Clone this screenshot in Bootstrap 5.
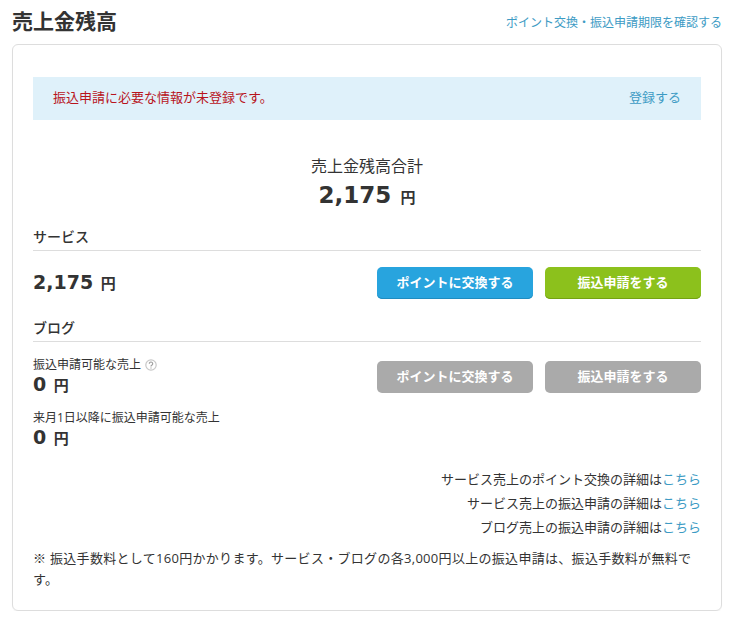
<!doctype html>
<html lang="ja">
<head>
<meta charset="utf-8">
<title>売上金残高</title>
<link href="https://cdn.jsdelivr.net/npm/bootstrap@5.3.0/dist/css/bootstrap.min.css" rel="stylesheet">
<style>
body{font-family:"Open Sans","Noto Sans CJK JP",sans-serif;color:#333;font-size:13px;background:#fff;line-height:1.5}
a{color:#3d9bc4;text-decoration:none}
.page-wrap{padding:7px 12px 0;width:734px}
.page-head{height:37px}
.page-title{font-size:21px;font-weight:700;line-height:28px;margin:0;color:#333}
.head-link{font-size:12px;line-height:18px;padding-top:7px}
.panel-box{border:1px solid #ddd;border-radius:6px;padding:32px 20px 20px;box-shadow:0 1px 1px rgba(0,0,0,.04)}
.notice-bar{background:#dff1fa;height:43px;padding:0 20px 2px;font-size:13px}
.notice-text{color:#b8141c}
.notice-link{font-size:13px}
.total-block{margin-top:35px;height:61px}
.total-label{font-size:16px;line-height:22px}
.total-num{font-family:"DejaVu Sans","Noto Sans CJK JP",sans-serif;font-size:23px;font-weight:700;line-height:36px}
.yen-big{font-family:"Noto Sans CJK JP",sans-serif;font-size:15px;font-weight:700;margin-left:1px}
.sec-title{font-size:14px;line-height:20px;padding-bottom:3px;border-bottom:1px solid #ddd;font-weight:500}
.svc-sec{margin-top:11px}
.svc-row{height:64px}
.amount{font-family:"DejaVu Sans","Noto Sans CJK JP",sans-serif;font-size:19px;font-weight:700;line-height:24px}
.amount-lift{padding-bottom:2px}
.amount-tight{margin-top:-2px}
.yen{font-family:"Noto Sans CJK JP",sans-serif;font-size:15px;font-weight:700;margin-left:1px}
.pay-group{gap:12px}
.pay-btn{width:156px;height:32px;border:0;border-radius:5px;color:#fff;font-size:13px;font-weight:700;padding:0 0 2px;line-height:30px;display:block}
.pay-blue,.pay-blue:hover{background:#28a4de;box-shadow:inset 0 -1px 0 #1f8cc0;color:#fff}
.pay-green,.pay-green:hover{background:#8cc11c;box-shadow:inset 0 -1px 0 #74a212;color:#fff}
.pay-gray,.pay-gray:disabled{background:#aaa;opacity:1;color:#fff}
.blog-sec{margin-top:3px}
.blog-rows{padding-top:14px}
.gray-group{margin-top:5px}
.sub-label{font-size:12px;line-height:18px}
.help-mark{width:12px;height:12px;margin-left:1px;vertical-align:-2px}
.second-item{margin-top:12px}
.detail-links{margin-top:17px;font-size:13px;line-height:24px}
.fee-note{margin-top:9px;font-size:13px;line-height:21px;margin-bottom:0;letter-spacing:.3px}
</style>
</head>
<body>
<div class="page-wrap">
  <div class="page-head d-flex justify-content-between align-items-start">
    <h1 class="page-title">売上金残高</h1>
    <a class="head-link" href="#">ポイント交換・振込申請期限を確認する</a>
  </div>
  <div class="panel-box">
    <div class="notice-bar d-flex justify-content-between align-items-center">
      <span class="notice-text">振込申請に必要な情報が未登録です。</span>
      <a class="notice-link" href="#">登録する</a>
    </div>
    <div class="total-block text-center">
      <div class="total-label">売上金残高合計</div>
      <div class="total-num">2,175 <span class="yen-big">円</span></div>
    </div>
    <div class="svc-sec">
      <div class="sec-title">サービス</div>
      <div class="svc-row d-flex justify-content-between align-items-center">
        <div class="amount amount-lift">2,175 <span class="yen">円</span></div>
        <div class="d-flex pay-group">
          <button type="button" class="btn pay-btn pay-blue">ポイントに交換する</button>
          <button type="button" class="btn pay-btn pay-green">振込申請をする</button>
        </div>
      </div>
    </div>
    <div class="blog-sec">
      <div class="sec-title">ブログ</div>
      <div class="blog-rows d-flex justify-content-between align-items-start">
        <div>
          <div class="sub-label">振込申請可能な売上
            <svg class="help-mark" viewBox="0 0 12 12" aria-hidden="true"><circle cx="6" cy="6" r="5.2" fill="none" stroke="#c8c8c8" stroke-width="1.2"/><path d="M4.3 4.7a1.7 1.7 0 1 1 2.7 1.4c-.7.4-1 .7-1 1.3M6 8.5v1" fill="none" stroke="#a0a0a0" stroke-width="1.2"/></svg>
          </div>
          <div class="amount amount-tight">0 <span class="yen">円</span></div>
          <div class="sub-label second-item">来月1日以降に振込申請可能な売上</div>
          <div class="amount amount-tight">0 <span class="yen">円</span></div>
        </div>
        <div class="d-flex pay-group gray-group">
          <button type="button" class="btn pay-btn pay-gray" disabled>ポイントに交換する</button>
          <button type="button" class="btn pay-btn pay-gray" disabled>振込申請をする</button>
        </div>
      </div>
    </div>
    <div class="detail-links text-end">
      <div>サービス売上のポイント交換の詳細は<a href="#">こちら</a></div>
      <div>サービス売上の振込申請の詳細は<a href="#">こちら</a></div>
      <div>ブログ売上の振込申請の詳細は<a href="#">こちら</a></div>
    </div>
    <p class="fee-note">※ 振込手数料として160円かかります。サービス・ブログの各3,000円以上の振込申請は、振込手数料が無料です。</p>
  </div>
</div>
</body>
</html>
